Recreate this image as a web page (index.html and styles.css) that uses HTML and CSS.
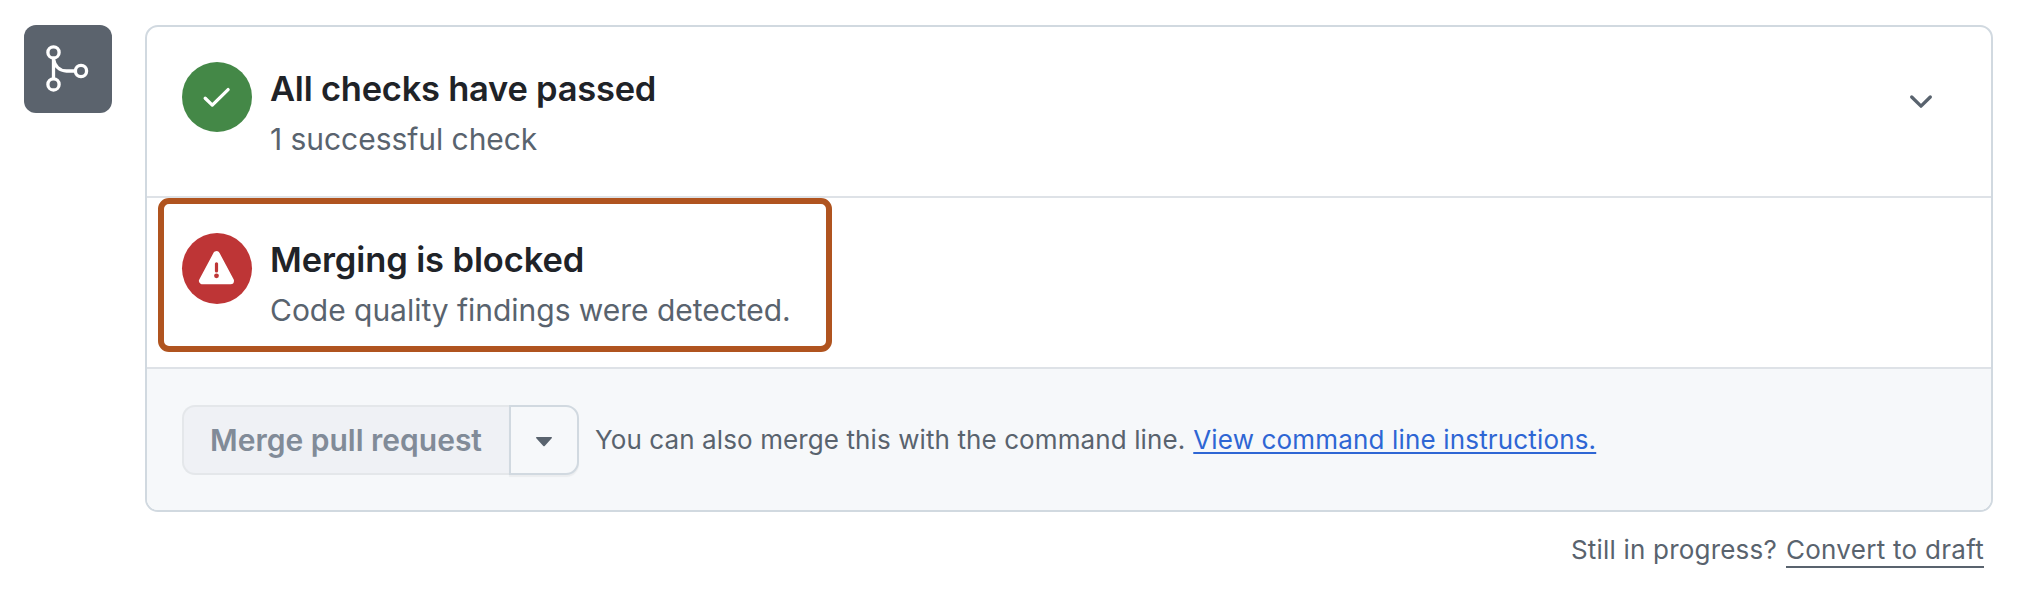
FILE: index.html
```html
<!DOCTYPE html>
<html lang="en">
<head>
<meta charset="utf-8">
<title>Merge status</title>
<link rel="stylesheet" href="styles.css">
</head>
<body>
<main class="timeline">
  <div class="badge">
    <svg class="badge-icon" viewBox="0 0 88 88" aria-hidden="true">
      <circle cx="29.5" cy="27.4" r="5.6"/>
      <circle cx="57" cy="46" r="5.6"/>
      <circle cx="29.5" cy="59.4" r="5.6"/>
      <path d="M29.5 33V54M29.5 34C30.5 41 35.5 46 42.5 46H51"/>
    </svg>
  </div>
  <div class="content">
    <section class="panel">
      <div class="row">
        <svg class="status status-ok" viewBox="0 0 70 70" aria-hidden="true">
          <path class="tick" d="M23.2 36.2L30.3 43.1L46.1 27.6"/>
        </svg>
        <div class="copy">
          <h3 class="title"><span class="title-checks">All checks have passed</span></h3>
          <p class="subtitle sub-checks">1 successful check</p>
        </div>
        <svg class="chevron" viewBox="0 0 24 16" aria-hidden="true"><path d="M2.7 3L12 12.2L21.3 3"/></svg>
      </div>
      <div class="row row-blocked">
        <svg class="status status-error" viewBox="0 0 70 70" aria-hidden="true">
          <path class="triangle" d="M34.5 21.2L20.5 47.3H48.5Z"/>
          <path class="mark" d="M34.5 30.3V37.4"/>
          <circle class="dot" cx="34.5" cy="42.3" r="2.4"/>
        </svg>
        <div class="copy">
          <h3 class="title"><span class="title-blocked">Merging is blocked</span></h3>
          <p class="subtitle sub-blocked">Code quality findings were detected.</p>
        </div>
        <div class="highlight"></div>
      </div>
      <div class="footer">
        <div class="button-group">
          <button class="merge" disabled><span class="merge-label">Merge pull request</span></button>
          <button class="options" aria-label="Merge options">
            <svg class="caret" viewBox="0 0 18 10" aria-hidden="true"><path d="M1.7 0H16.3Q17.6 .2 16.7 1.2L9.7 9Q9 9.7 8.3 9L1.3 1.2Q.4 .2 1.7 0Z"/></svg>
          </button>
        </div>
        <p class="hint"><span class="hint-text">You can also merge this with the command line.</span><a class="link" href="#">View command line instructions.</a></p>
      </div>
    </section>
    <p class="draft"><span class="draft-text">Still in progress?</span><a class="draft-link" href="#">Convert to draft</a></p>
  </div>
</main>
</body>
</html>
```

FILE: styles.css
```css
* { box-sizing: border-box; }
body {
  margin: 0;
  background: #fff;
  color: #1f2328;
  font-family: Inter, "Liberation Sans", sans-serif;
}
h3, p { margin: 0; white-space: nowrap; }
.timeline { display: flex; gap: 33px; padding: 25px 29px 0 24px; }
.badge { width: 88px; height: 88px; flex: none; border-radius: 12px; background: #5b636d; }
.badge-icon { display: block; fill: none; stroke: #fff; stroke-width: 3.3; }
.content { flex: 1; }
.panel { height: 487px; border: 2px solid #d1d9e0; border-radius: 13px; overflow: hidden; }
.row { position: relative; display: flex; height: 171px; padding: 35px 58px 0 35px; border-bottom: 2px solid #dee2e7; }
.status { width: 70px; height: 70px; flex: none; border-radius: 50%; }
.status-ok { background: #448847; }
.status-error { height: 71px; background: #be3536; }
.tick { fill: none; stroke: #fff; stroke-width: 3.3; stroke-linecap: round; stroke-linejoin: round; }
.triangle { fill: #fff; stroke: #fff; stroke-width: 7; stroke-linejoin: round; }
.mark { stroke: #be3536; stroke-width: 3.2; stroke-linecap: round; }
.dot { fill: #be3536; }
.copy { flex: 1; padding-left: 18px; }
.title { font-size: 34.5px; line-height: 53px; font-weight: 600; }
.subtitle { font-size: 30px; line-height: 48px; color: #59636e; }
.title-checks { letter-spacing: -0.24px; }
.title-blocked { letter-spacing: -0.12px; }
.sub-checks { letter-spacing: -0.05px; }
.sub-blocked { letter-spacing: -0.03px; }
.chevron { width: 24px; height: 16px; margin-top: 32px; fill: none; stroke: #59636e; stroke-width: 3.3; stroke-linecap: round; stroke-linejoin: round; }
.highlight { position: absolute; left: 11px; top: 0; width: 674px; height: 154px; border: 6px solid #b0541f; border-radius: 11px; }
.footer { display: flex; height: 141px; padding: 36px 35px 0; background: #f6f8fa; }
.button-group { display: flex; height: 70px; }
button { padding: 0; font-family: inherit; }
.merge { width: 327px; padding-left: 26px; text-align: left; border: 2px solid #e4e7ea; border-right: 0; border-radius: 13px 0 0 13px; background: #eff1f5; color: #818b98; font-size: 30px; font-weight: 600; white-space: nowrap; }
.options { display: flex; align-items: center; justify-content: center; width: 70px; border: 2px solid #d1d9e0; border-radius: 0 13px 13px 0; background: #f6f8fa; box-shadow: 0 2px 1px rgba(31, 35, 40, 0.05); }
.caret { width: 18px; height: 10px; margin-top: 4px; fill: #59636e; }
.hint { display: flex; align-items: flex-start; gap: 8px; padding-left: 16px; font-size: 26px; line-height: 70px; color: #59636e; }
.hint-text { letter-spacing: 0.1px; }
.link { color: #2e66d4; letter-spacing: 0.16px; text-decoration: underline; text-decoration-thickness: 2px; text-underline-offset: 3px; }
.draft { display: flex; justify-content: flex-end; align-items: flex-start; gap: 9px; padding: 21px 9px 0 0; font-size: 26px; line-height: 33px; color: #59636e; }
.draft-text { letter-spacing: 0.2px; }
.draft-link { border-bottom: 2px solid #59636e; color: inherit; letter-spacing: 0.28px; text-decoration: none; }
```
